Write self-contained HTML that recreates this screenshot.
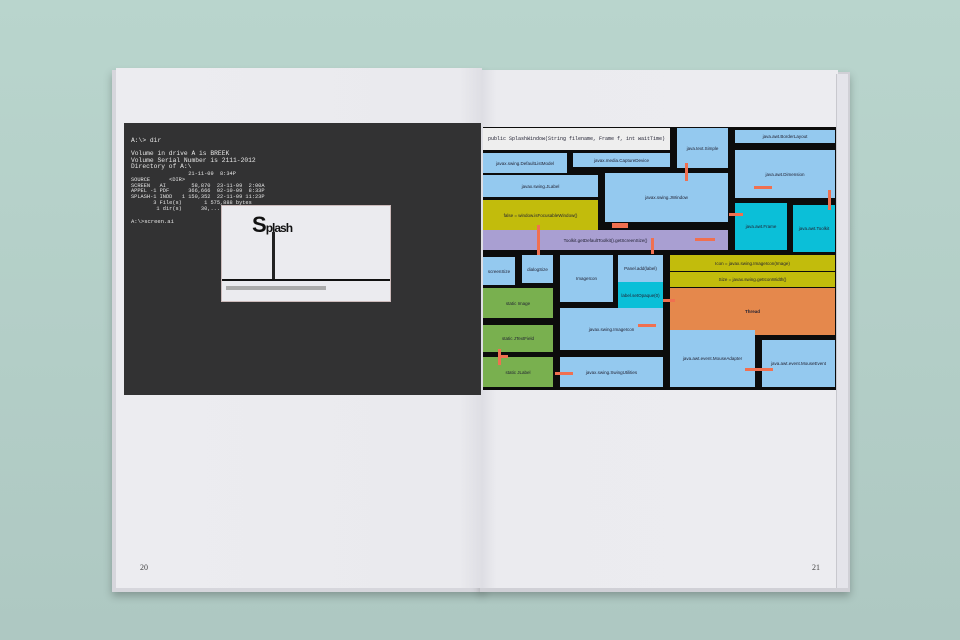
<!DOCTYPE html>
<html><head><style>
body{margin:0;width:960px;height:640px;overflow:hidden;background:linear-gradient(#b9d5cd,#aec8c2);position:relative;font-family:"Liberation Sans",sans-serif}
div{position:absolute;box-sizing:border-box}
.b{font-size:4.5px;color:#223;display:flex;align-items:center;justify-content:center;text-align:center}
.lb{background:#94c9ef}
.y{background:#c2bc0c}
.g{background:#79b04f}
.c{background:#0bbfd8}
.ar{background:#f07050;height:3px}
.mono{font-family:"Liberation Mono",monospace;color:#e6e6e6;font-size:6.3px;line-height:6.6px;white-space:pre}
</style></head><body>
<div style="left:112px;top:70px;width:372px;height:522px;background:#d6d6dc;box-shadow:0 4px 8px rgba(0,0,0,.25)"></div>
<div style="left:480px;top:72px;width:370px;height:520px;background:#d0d0d6;box-shadow:0 4px 8px rgba(0,0,0,.25)"></div>
<div style="left:116px;top:68px;width:366px;height:520px;background:linear-gradient(90deg,#ececf0 0%,#eaeaee 94%,#dedee4 100%)"></div>
<div style="left:482px;top:70px;width:356px;height:518px;background:linear-gradient(90deg,#dedee4 0%,#ebebef 4%,#ececf0 100%)"></div>
<div style="left:836px;top:74px;width:12px;height:514px;background:#e4e4ea;border-left:1px solid #c8c8ce"></div>
<!-- left dark block -->
<div style="left:124px;top:123px;width:357px;height:272px;background:#323233"></div>
<div class="mono" style="left:131px;top:138px">A:\> dir

Volume in drive A is BREEK
Volume Serial Number is 2111-2012
Directory of A:\</div>
<div class="mono" style="left:131px;top:172px;font-size:5.3px;line-height:5.8px">                  21-11-09  8:34P
SOURCE      &lt;DIR&gt;
SCREEN   AI        58,870  23-11-09  2:00A
APPEL -1 PDF      366,666  02-10-09  8:33P
SPLASH-1 INDD   1 150,352  22-11-09 11:23P
       3 File(s)       1 575,888 bytes
        1 dir(s)      30,...</div>
<div class="mono" style="left:131px;top:219px;font-size:5.5px">A:\>screen.ai</div>
<div style="left:221px;top:205px;width:170px;height:97px;background:#ebebef;border:1px solid #cbb"></div>
<div style="left:222px;top:279px;width:168px;height:2px;background:#111"></div>
<div style="left:226px;top:286px;width:100px;height:4px;background:#aaa"></div>
<div style="left:252px;top:212px;font:900 22px 'Liberation Sans';color:#111;letter-spacing:-1px">S<span style="font-size:12px">plash</span></div>
<div style="left:272px;top:232px;width:3px;height:47px;background:#222"></div>
<div style="left:140px;top:563px;font:8px 'Liberation Serif';color:#444">20</div>
<div style="left:812px;top:563px;font:8px 'Liberation Serif';color:#444">21</div>
<!-- right diagram -->
<div style="left:483px;top:127px;width:353px;height:263px;background:#0c0c0c"></div>
<div class="b" style="left:483px;top:128px;width:187px;height:22px;background:#eee;font-family:'Liberation Mono';font-size:5px">public SplashWindow(String filename, Frame f, int waitTime)</div>
<div class="b lb" style="left:677px;top:128px;width:51px;height:40px">java.text.Simple</div>
<div class="b lb" style="left:735px;top:130px;width:100px;height:13px">java.awt.BorderLayout</div>
<div class="b lb" style="left:483px;top:153px;width:84px;height:20px">javax.swing.DefaultListModel</div>
<div class="b lb" style="left:573px;top:153px;width:97px;height:14px">javax.media.CaptureDevice</div>
<div class="b lb" style="left:483px;top:175px;width:115px;height:22px">javax.swing.JLabel</div>
<div class="b lb" style="left:605px;top:173px;width:123px;height:49px">javax.swing.JWindow</div>
<div class="b lb" style="left:735px;top:150px;width:100px;height:48px">java.awt.Dimension</div>
<div class="b y" style="left:483px;top:200px;width:115px;height:30px">false = window.isFocusableWindow()</div>
<div class="b" style="left:483px;top:230px;width:245px;height:20px;background:#a99fd2">Toolkit.getDefaultToolkit().getScreenSize()</div>
<div class="b c" style="left:735px;top:203px;width:52px;height:47px">java.awt.Frame</div>
<div class="b c" style="left:793px;top:205px;width:42px;height:47px">java.awt.Toolkit</div>
<div class="b lb" style="left:483px;top:257px;width:32px;height:28px">screenSize</div>
<div class="b lb" style="left:522px;top:255px;width:31px;height:28px">dialogSize</div>
<div class="b lb" style="left:560px;top:255px;width:53px;height:47px">ImageIcon</div>
<div class="b lb" style="left:618px;top:255px;width:45px;height:27px">Panel.add(label)</div>
<div class="b c" style="left:618px;top:282px;width:45px;height:26px">label.setOpaque(0)</div>
<div class="b y" style="left:670px;top:255px;width:165px;height:16px">Icon = javax.swing.ImageIcon(Image)</div>
<div class="b y" style="left:670px;top:272px;width:165px;height:15px">Size = javax.swing.getIconWidth()</div>
<div class="b" style="left:670px;top:288px;width:165px;height:47px;background:#e5884c;font-weight:bold">Thread</div>
<div class="b g" style="left:483px;top:288px;width:70px;height:30px">static Image</div>
<div class="b g" style="left:483px;top:325px;width:70px;height:27px">static JTextField</div>
<div class="b g" style="left:483px;top:357px;width:70px;height:30px">static JLabel</div>
<div class="b lb" style="left:560px;top:308px;width:103px;height:42px">javax.swing.ImageIcon</div>
<div class="b lb" style="left:560px;top:357px;width:103px;height:30px">javax.swing.SwingUtilities</div>
<div class="b lb" style="left:670px;top:330px;width:85px;height:57px">java.awt.event.MouseAdapter</div>
<div class="b lb" style="left:762px;top:340px;width:73px;height:47px">java.awt.event.MouseEvent</div>
<div class="ar" style="left:612px;top:223px;width:16px;height:5px"></div>
<div class="ar" style="left:729px;top:213px;width:14px"></div>
<div class="ar" style="left:695px;top:238px;width:20px"></div>
<div class="ar" style="left:754px;top:186px;width:18px"></div>
<div class="ar" style="left:537px;top:225px;width:3px;height:30px"></div>
<div class="ar" style="left:651px;top:238px;width:3px;height:16px"></div>
<div class="ar" style="left:685px;top:163px;width:3px;height:18px"></div>
<div class="ar" style="left:828px;top:190px;width:3px;height:20px"></div>
<div class="ar" style="left:663px;top:299px;width:12px"></div>
<div class="ar" style="left:638px;top:324px;width:18px"></div>
<div class="ar" style="left:555px;top:372px;width:18px"></div>
<div class="ar" style="left:745px;top:368px;width:28px"></div>
<div class="ar" style="left:498px;top:349px;width:3px;height:16px"></div>
<div class="ar" style="left:500px;top:355px;width:8px"></div>
</body></html>
